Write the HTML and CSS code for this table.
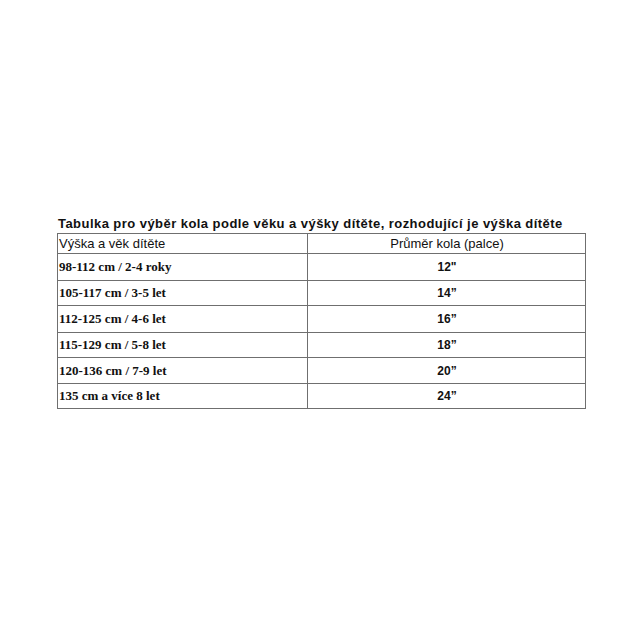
FILE: index.html
```html
<!DOCTYPE html>
<html lang="cs">
<head>
<meta charset="utf-8">
<link rel="stylesheet" href="styles.css">
</head>
<body>
<div class="wrap">
  <div class="title">Tabulka pro výběr kola podle věku a výšky dítěte, rozhodující je výška dítěte</div>
  <table class="sizes">
    <tr class="head"><td class="c1">Výška a věk dítěte</td><td class="c2">Průměr kola (palce)</td></tr>
    <tr class="r27"><td class="c1 age">98-112 cm / 2-4 roky</td><td class="c2 num">12"</td></tr>
    <tr class="r25"><td class="c1 age">105-117 cm / 3-5 let</td><td class="c2 num">14”</td></tr>
    <tr class="r27"><td class="c1 age">112-125 cm / 4-6 let</td><td class="c2 num">16”</td></tr>
    <tr class="r25"><td class="c1 age">115-129 cm / 5-8 let</td><td class="c2 num">18”</td></tr>
    <tr class="r26"><td class="c1 age">120-136 cm / 7-9 let</td><td class="c2 num">20”</td></tr>
    <tr class="r25"><td class="c1 age">135 cm a více 8 let</td><td class="c2 num">24”</td></tr>
  </table>
</div>
</body>
</html>
```
FILE: styles.css
```css
html, body {
  margin: 0;
  padding: 0;
  background: #ffffff;
}
.wrap {
  padding: 215px 0 0 57px;
  width: 530px;
}
.title {
  font-family: "Liberation Sans", Arial, sans-serif;
  font-weight: bold;
  font-size: 13px;
  line-height: 17px;
  color: #111;
  padding-left: 1px;
  letter-spacing: 0.45px;
  white-space: nowrap;
}
.sizes {
  border-collapse: collapse;
  width: 529px;
  margin-top: 1px;
}
.sizes td {
  border: 1px solid #6f6f6f;
  padding: 0 0 0 1px;
  vertical-align: middle;
  color: #111;
}
.c1 { width: 248px; }
.head td {
  height: 19px;
  font-family: "Liberation Sans", Arial, sans-serif;
  font-size: 13px;
}
.head .c2 { text-align: center; }
.r27 td { height: 26px; }
.r26 td { height: 25px; }
.r25 td { height: 24px; }
.age {
  font-family: "Liberation Serif", Cambria, serif;
  font-weight: bold;
  font-size: 13px;
}
.num {
  text-align: center;
  font-family: "Liberation Sans", Arial, sans-serif;
  font-weight: bold;
  font-size: 12px;
}
```
